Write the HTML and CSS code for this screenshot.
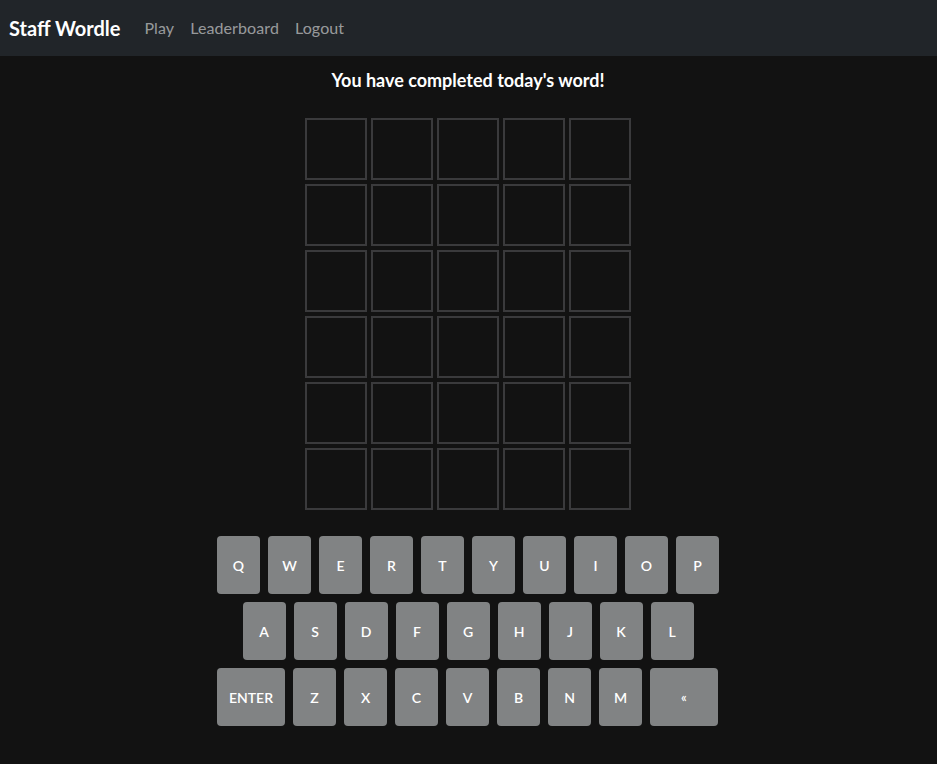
FILE: index.html
```html
<!DOCTYPE html>
<html lang="en">
<head>
<meta charset="utf-8">
<title>Staff Wordle</title>
<link rel="stylesheet" href="styles.css">
</head>
<body>
<nav class="navbar">
  <a class="brand" href="#">Staff Wordle</a>
  <ul class="nav">
    <li><a class="nav-link" href="#">Play</a></li>
    <li><a class="nav-link" href="#">Leaderboard</a></li>
    <li><a class="nav-link" href="#">Logout</a></li>
  </ul>
</nav>
<main class="game">
  <h1 class="message">You have completed today's word!</h1>
  <div class="board">
    <div class="tile"></div><div class="tile"></div><div class="tile"></div><div class="tile"></div><div class="tile"></div>
    <div class="tile"></div><div class="tile"></div><div class="tile"></div><div class="tile"></div><div class="tile"></div>
    <div class="tile"></div><div class="tile"></div><div class="tile"></div><div class="tile"></div><div class="tile"></div>
    <div class="tile"></div><div class="tile"></div><div class="tile"></div><div class="tile"></div><div class="tile"></div>
    <div class="tile"></div><div class="tile"></div><div class="tile"></div><div class="tile"></div><div class="tile"></div>
    <div class="tile"></div><div class="tile"></div><div class="tile"></div><div class="tile"></div><div class="tile"></div>
  </div>
  <div class="keyboard">
    <div class="krow">
      <button class="key">Q</button><button class="key">W</button><button class="key">E</button><button class="key">R</button><button class="key">T</button><button class="key">Y</button><button class="key">U</button><button class="key">I</button><button class="key">O</button><button class="key">P</button>
    </div>
    <div class="krow">
      <button class="key">A</button><button class="key">S</button><button class="key">D</button><button class="key">F</button><button class="key">G</button><button class="key">H</button><button class="key">J</button><button class="key">K</button><button class="key">L</button>
    </div>
    <div class="krow krow-start">
      <button class="key wide">ENTER</button><button class="key">Z</button><button class="key">X</button><button class="key">C</button><button class="key">V</button><button class="key">B</button><button class="key">N</button><button class="key">M</button><button class="key wide small">«</button>
    </div>
  </div>
</main>
</body>
</html>
```
FILE: styles.css
```css
* { box-sizing: border-box; }
html, body {
  margin: 0;
  padding: 0;
  background: #121212;
  font-family: Lato, "Open Sans", sans-serif;
  color: #fff;
}
.navbar {
  height: 56px;
  background: #212529;
  display: flex;
  align-items: center;
  padding: 0 9px 1px;
}
.brand {
  color: #fff;
  text-decoration: none;
  font-size: 20px;
  font-weight: bold;
  margin-right: 16px;
}
.nav {
  list-style: none;
  margin: 0;
  padding: 0;
  display: flex;
}
.nav-link {
  display: block;
  padding: 8px;
  color: rgba(255,255,255,0.55);
  text-decoration: none;
  font-size: 16px;
  letter-spacing: 0.1px;
}
.game {
  display: flex;
  flex-direction: column;
  align-items: center;
  padding-right: 1px;
}
.message {
  margin: 13px 0 0;
  font-size: 18px;
  font-weight: bold;
  line-height: 22px;
}
.board {
  margin-top: 27px;
  display: grid;
  grid-template-columns: repeat(5, 62px);
  grid-auto-rows: 62px;
  gap: 4px;
}
.tile {
  border: 2px solid #3a3a3c;
}
.keyboard {
  margin-top: 26px;
  display: flex;
  flex-direction: column;
  gap: 8px;
}
.krow {
  display: flex;
  justify-content: center;
  gap: 8px;
}
.krow-start {
  justify-content: flex-start;
}
.key {
  width: 43px;
  height: 58px;
  border: 0;
  border-radius: 4px;
  background: #818384;
  color: #fff;
  font-family: Lato, "Open Sans", sans-serif;
  font-size: 14px;
  font-weight: 600;
  padding: 0;
}
.key.wide { width: 68px; }
.key.small { font-size: 13px; }
```
